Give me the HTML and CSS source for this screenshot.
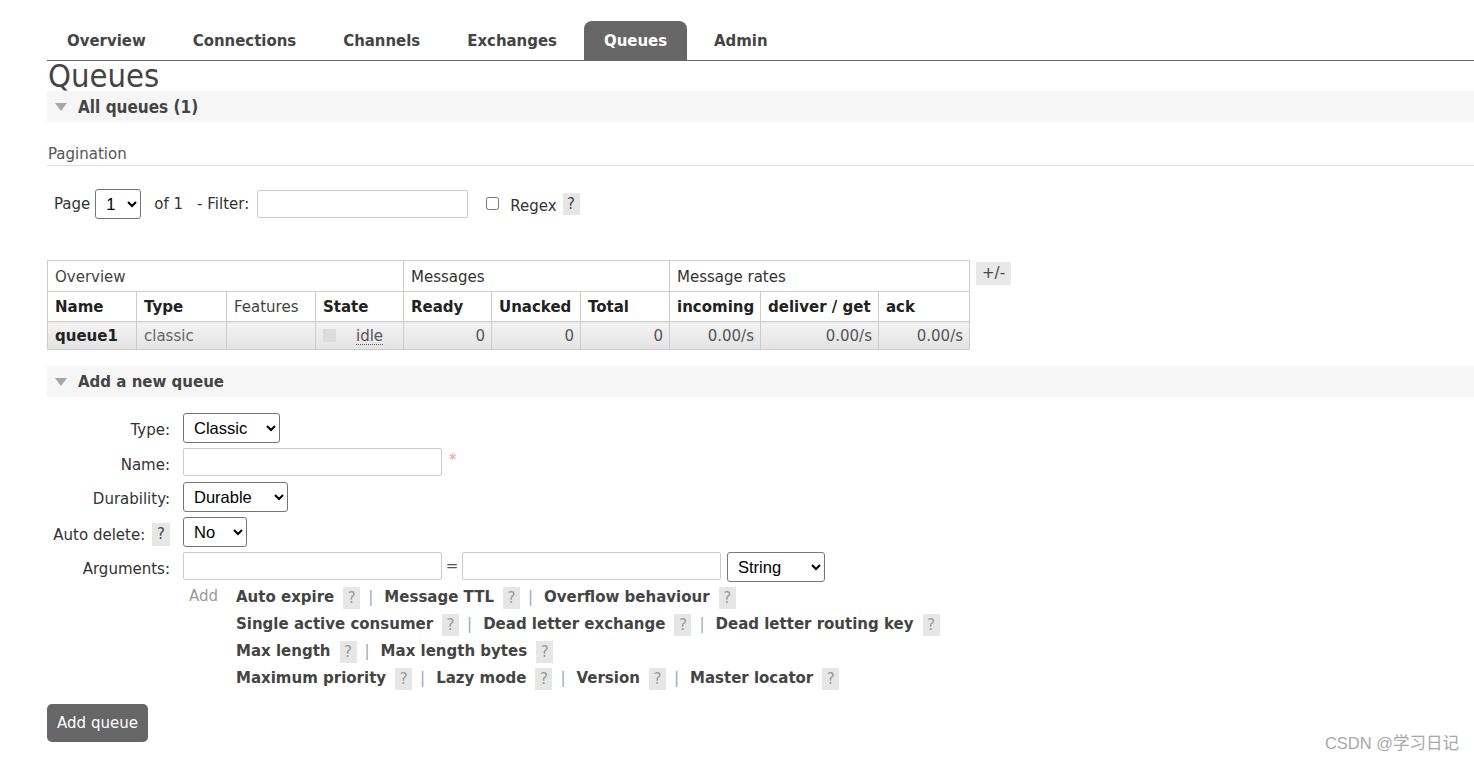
FILE: index.html
```html
<!DOCTYPE html>
<html>
<head>
<meta charset="utf-8">
<title>Queues</title>
<link rel="stylesheet" href="styles.css">
</head>
<body>
<div class="page">
  <nav class="tabs">
    <a class="tab">Overview</a>
    <a class="tab">Connections</a>
    <a class="tab">Channels</a>
    <a class="tab">Exchanges</a>
    <a class="tab tab--active">Queues</a>
    <a class="tab">Admin</a>
  </nav>
  <h1 class="title">Queues</h1>

  <div class="section-h section-h--cond"><span class="tri"></span>All queues (1)</div>

  <div class="pag-title">Pagination</div>
  <div class="filter-row">
    <span class="txt">Page</span>
    <select class="sel sel-page"><option>1</option></select>
    <span class="txt of">of 1</span>
    <span class="txt">- Filter:</span>
    <input class="inp inp-filter" type="text">
    <input class="cb" type="checkbox">
    <span class="txt regex">Regex</span>
    <span class="help help--dark">?</span>
  </div>

  <div class="table-wrap">
    <table class="list">
      <colgroup>
        <col style="width:89px"><col style="width:90px"><col style="width:89px"><col style="width:88px">
        <col style="width:88px"><col style="width:89px"><col style="width:89px">
        <col style="width:91px"><col style="width:118px"><col style="width:91px">
      </colgroup>
      <thead>
        <tr class="grp">
          <th colspan="4">Overview</th>
          <th colspan="3" class="dark">Messages</th>
          <th colspan="3" class="dark">Message rates</th>
        </tr>
        <tr class="hdr">
          <th>Name</th><th>Type</th><th class="plain">Features</th><th>State</th>
          <th>Ready</th><th>Unacked</th><th>Total</th>
          <th>incoming</th><th>deliver / get</th><th>ack</th>
        </tr>
      </thead>
      <tbody>
        <tr class="row">
          <td class="qname">queue1</td>
          <td class="muted">classic</td>
          <td></td>
          <td class="state"><span class="sq"></span><span class="idle">idle</span></td>
          <td class="num">0</td><td class="num">0</td><td class="num">0</td>
          <td class="num">0.00/s</td><td class="num">0.00/s</td><td class="num">0.00/s</td>
        </tr>
      </tbody>
    </table>
    <span class="plusminus">+/-</span>
  </div>

  <div class="section-h section-h--add"><span class="tri"></span>Add a new queue</div>

  <div class="form">
    <div class="frow">
      <label class="flabel">Type:</label>
      <select class="sel w-type"><option>Classic</option></select>
    </div>
    <div class="frow">
      <label class="flabel">Name:</label>
      <input class="inp w-name" type="text">
      <span class="req">*</span>
    </div>
    <div class="frow">
      <label class="flabel">Durability:</label>
      <select class="sel w-dur"><option>Durable</option></select>
    </div>
    <div class="frow">
      <label class="flabel">Auto delete: <span class="help help--dark help--lbl">?</span></label>
      <select class="sel w-auto"><option>No</option></select>
    </div>
    <div class="frow">
      <label class="flabel">Arguments:</label>
      <input class="inp w-name" type="text">
      <span class="eq">=</span>
      <input class="inp w-name" type="text">
      <select class="sel w-str"><option>String</option></select>
    </div>
    <div class="add-row">
      <span class="add-label">Add</span>
      <div class="links">
        <div class="line"><span class="lk">Auto expire</span><span class="help">?</span><span class="sep">|</span><span class="lk">Message TTL</span><span class="help">?</span><span class="sep">|</span><span class="lk">Overflow behaviour</span><span class="help">?</span></div>
        <div class="line"><span class="lk">Single active consumer</span><span class="help">?</span><span class="sep">|</span><span class="lk">Dead letter exchange</span><span class="help">?</span><span class="sep">|</span><span class="lk">Dead letter routing key</span><span class="help">?</span></div>
        <div class="line"><span class="lk">Max length</span><span class="help">?</span><span class="sep">|</span><span class="lk">Max length bytes</span><span class="help">?</span></div>
        <div class="line"><span class="lk">Maximum priority</span><span class="help">?</span><span class="sep">|</span><span class="lk">Lazy mode</span><span class="help">?</span><span class="sep">|</span><span class="lk">Version</span><span class="help">?</span><span class="sep">|</span><span class="lk">Master locator</span><span class="help">?</span></div>
      </div>
    </div>
  </div>

  <button class="btn">Add queue</button>
</div>
<div class="watermark">CSDN @学习日记</div>
</body>
</html>
```

FILE: styles.css
```css
html, body {
  margin: 0;
  background: #fff;
}
body {
  font-family: "DejaVu Sans", Verdana, sans-serif;
  font-size: 15px;
  color: #444;
  overflow: hidden;
  height: 762px;
  position: relative;
}
.page {
  padding-left: 47px;
}

/* tabs */
.tabs {
  display: flex;
  padding-top: 21px;
  border-bottom: 1px solid #666;
}
.tab {
  display: block;
  padding: 0 20px;
  margin-right: 7px;
  line-height: 39px;
  height: 39px;
  font-family: "DejaVu Sans Condensed", "DejaVu Sans", sans-serif;
  font-stretch: condensed;
  font-weight: bold;
  font-size: 16.6px;
  color: #444;
  border-radius: 8px 8px 0 0;
}
.tab--active {
  background: #666;
  color: #fff;
}

.title {
  margin: 0;
  height: 30px;
  line-height: 30px;
  font-family: "DejaVu Sans Condensed", "DejaVu Sans", sans-serif;
  font-stretch: condensed;
  font-weight: 300;
  font-size: 32.5px;
  color: #444;
  padding-left: 1px;
}

/* section headers */
.section-h {
  display: flex;
  align-items: center;
  height: 31px;
  background: #f6f6f6;
  font-weight: bold;
  color: #444;
}
.section-h--cond {
  font-family: "DejaVu Sans Condensed", "DejaVu Sans", sans-serif;
  font-stretch: condensed;
  font-size: 17px;
}
.section-h--add {
  margin-top: 16px;
  font-size: 15px;
}
.tri {
  width: 0;
  height: 0;
  border-left: 6.5px solid transparent;
  border-right: 6.5px solid transparent;
  border-top: 8px solid #a6a6a6;
  margin: 1px 11px 0 8px;
}

.pag-title {
  margin-top: 22px;
  line-height: 20px;
  padding-bottom: 1px;
  padding-left: 1px;
  border-bottom: 1px solid #ddd;
  color: #555;
}

.filter-row {
  display: flex;
  align-items: center;
  height: 29px;
  margin-top: 23px;
  padding-left: 7px;
}
.txt {
  color: #333;
}
.sel-page {
  width: 46px;
  margin: 0 13px 0 5px;
}
.of {
  margin-right: 14px;
}
.inp-filter {
  width: 211px;
  height: 27px;
  margin-left: 8px;
}
.cb {
  width: 13px;
  height: 13px;
  margin: 0 11px 0 18px;
}
.regex {
  margin-right: 6px;
  padding-top: 4px;
}

/* controls */
.sel {
  height: 30px;
  font-family: "Liberation Sans", Arial, sans-serif;
  font-size: 16.5px;
  color: #000;
  background: #fff;
  border: 1px solid #767676;
  border-radius: 3px;
  padding: 0 2px 0 6px;
}
.inp {
  box-sizing: border-box;
  height: 28px;
  border: 1px solid #ccc;
  border-radius: 2px;
  padding: 0 4px;
  background: #fff;
}

.help {
  display: inline-block;
  width: 17px;
  height: 22px;
  line-height: 22px;
  text-align: center;
  background: #e6e6e6;
  color: #999;
  font-weight: normal;
  margin-left: 9px;
  vertical-align: middle;
}
.help--dark {
  color: #444;
  margin-left: 0;
}
.help--lbl {
  margin-left: 2px;
  width: 18px;
  height: 23px;
  line-height: 23px;
}

/* table */
.table-wrap {
  display: flex;
  align-items: flex-start;
  margin-top: 42px;
}
.list {
  border-collapse: collapse;
  table-layout: fixed;
  width: 922px;
}
.list th, .list td {
  border: 1px solid #ccc;
  padding: 0 6px 0 7px;
  text-align: left;
  white-space: nowrap;
  overflow: hidden;
}
.grp th {
  height: 29px;
  padding-top: 1px;
  font-weight: normal;
  color: #444;
}
.grp th.dark {
  color: #333;
}
.hdr th {
  height: 29px;
  font-weight: bold;
  color: #222;
}
.hdr th.plain {
  font-weight: normal;
  color: #444;
}
.row td {
  height: 27px;
  background: linear-gradient(#f3f3f3, #e3e3e3);
  color: #555;
}
.row td.qname {
  font-weight: bold;
  color: #222;
}
.row td.muted {
  color: #666;
}
.row td.num {
  text-align: right;
}
.sq {
  display: inline-block;
  width: 13px;
  height: 13px;
  background: #dcdcdc;
  vertical-align: -1px;
  margin-right: 20px;
}
.idle {
  color: #555;
  border-bottom: 1px dotted #555;
  line-height: 16px;
  display: inline-block;
}
.plusminus {
  margin: 2px 0 0 6px;
  height: 23px;
  line-height: 23px;
  padding: 0 6px;
  background: #e8e8e8;
  color: #444;
}

/* form */
.form {
  margin-top: 16px;
}
.frow {
  display: flex;
  align-items: flex-start;
  height: 35px;
}
.frow:nth-child(2) {
  height: 34px;
}
.flabel {
  flex: none;
  width: 123px;
  margin-right: 13px;
  display: flex;
  justify-content: flex-end;
  align-items: center;
  gap: 5px;
  padding-top: 7px;
  line-height: 20px;
  color: #333;
  white-space: pre;
}
.frow:nth-child(4) .flabel {
  padding-top: 6px;
  gap: 0;
}
.w-type { width: 97px; }
.w-dur { width: 105px; }
.w-auto { width: 64px; }
.w-str { width: 98px; margin-left: 6px; }
.w-name { width: 259px; }
.req {
  color: #f29b9b;
  margin-left: 7px;
  padding-top: 3px;
}
.eq {
  width: 20px;
  text-align: center;
  line-height: 28px;
  color: #555;
}

.add-row {
  display: flex;
  margin-top: -3px;
  padding-left: 136px;
}
.add-label {
  width: 47px;
  padding-left: 6px;
  line-height: 24px;
  color: #999;
}
.line {
  line-height: 27px;
  white-space: nowrap;
}
.lk {
  font-weight: bold;
  color: #444;
}
.sep {
  color: #94a7bd;
  margin: 0 11px 0 8px;
}

.btn {
  display: block;
  margin-top: 12px;
  width: 101px;
  height: 38px;
  border: none;
  border-radius: 5px;
  background: #666;
  color: #fff;
  font-family: "DejaVu Sans", Verdana, sans-serif;
  font-size: 15px;
  padding: 0;
}

.watermark {
  position: absolute;
  right: 15px;
  bottom: 8px;
  font-family: "Liberation Sans", Arial, "Noto Sans CJK SC", sans-serif;
  font-size: 16.5px;
  color: #a8a8a8;
}
```
